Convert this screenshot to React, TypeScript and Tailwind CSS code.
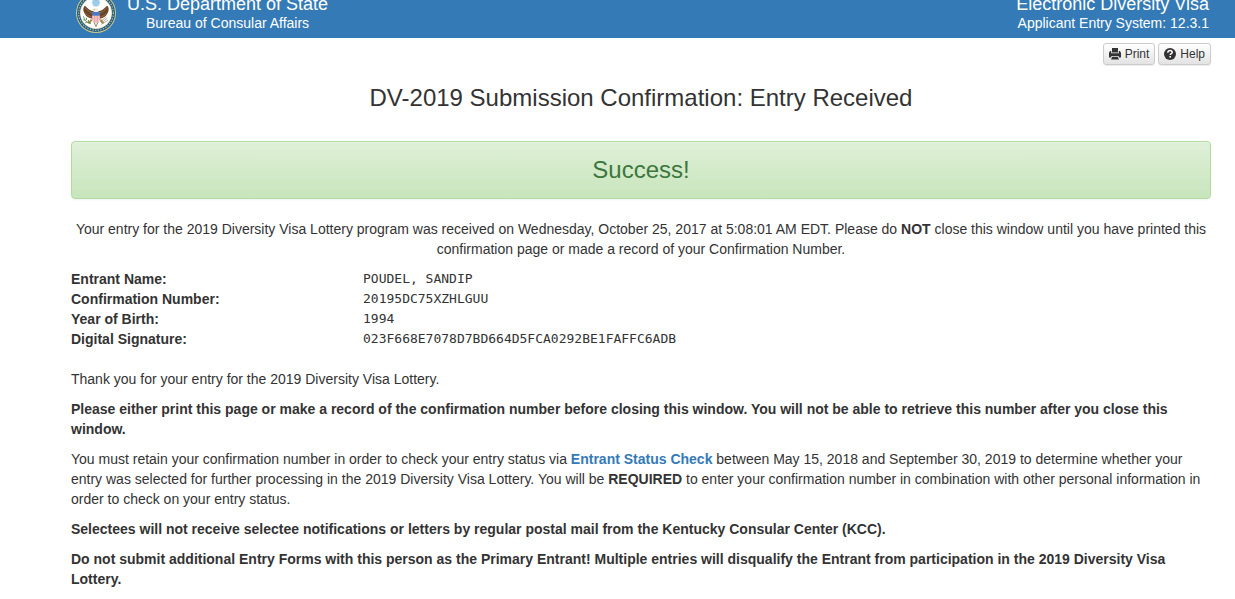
import React from 'react';

const star = 'M0 -1 L0.3 -0.3 L1 -0.3 L0.4 0.2 L0.6 1 L0 0.5 L-0.6 1 L-0.4 0.2 L-1 -0.3 L-0.3 -0.3 Z';

function Seal() {
  return (
    <svg viewBox="0 0 120 120" className="size-10 shrink-0" role="img" aria-label="Department of State seal">
      <circle cx="60" cy="60" r="60" fill="#d3c684" />
      <circle cx="60" cy="60" r="57" fill="#1f5c8a" />
      <circle cx="60" cy="60" r="52" fill="none" stroke="#b0b98f" strokeWidth="4" strokeDasharray="4 4" />
      <circle cx="60" cy="60" r="48" fill="#e3dcae" />
      <circle cx="60" cy="60" r="46" fill="#ffffff" />
      <circle cx="60" cy="29" r="11" fill="#8fc5e8" stroke="#b9dcf2" strokeWidth="2" />
      {[[56, 25], [64, 25], [60, 30], [55, 33], [65, 33]].map(([x, y]) => (
        <path key={`${x}-${y}`} d={star} transform={`translate(${x} ${y}) scale(2)`} fill="#e8f4fb" />
      ))}
      <g transform="translate(0 4)">
        <path
          d="M52 50 C44 50 37 44 27 34 C21 37 21 47 24 54 C27 62 32 68 41 71 L49 73 L55 84 L65 84 L71 73 L79 71 C88 68 93 62 96 54 C99 47 99 37 93 34 C83 44 76 50 68 50 L65 55 L55 55 Z"
          fill="#6b4528"
        />
        <path
          d="M27 39 C34 49 42 55 52 57 M28 57 C36 65 43 67 49 69 M93 39 C86 49 78 55 68 57 M92 57 C84 65 77 67 71 69"
          fill="none"
          stroke="#a17b50"
          strokeWidth="2"
        />
        <path d="M54 53 C53 45 56 41 61 41 C65 41 66 44 66 53 Z" fill="#f3eee0" />
        <path d="M56 43 L50 46 L56 48 Z" fill="#d3a23c" />
        <path d="M47 76 L38 87 M73 76 L82 87" stroke="#b5853a" strokeWidth="6" />
        <path d="M53 82 L60 97 L67 82 Z" fill="#eee7d3" stroke="#79583a" strokeWidth="2" />
        <path d="M48 54 H72 V72 C72 80 67 84 60 87 C53 84 48 80 48 72 Z" fill="#f7dcdc" />
        <path d="M50 61 V78 M55 61 V83 M60 61 V85 M65 61 V83 M70 61 V78" stroke="#e07c84" strokeWidth="2" />
        <path d="M48 53 H72 V64 H48 Z" fill="#4c78c4" />
        <path d="M45 86 C36 88 29 81 24 72" fill="none" stroke="#4f7b45" strokeWidth="3" />
        <path d="M25 72 l-3 -6 M29 78 l-7 -2 M34 82 l-6 3 M31 77 l1 -7 M38 83 l-1 -6" stroke="#68945b" strokeWidth="3" />
        <path d="M75 86 L94 72 M76 90 L96 78 M73 82 L91 68" stroke="#8e8b73" strokeWidth="2" />
      </g>
    </svg>
  );
}

function PrintIcon() {
  return (
    <svg viewBox="0 0 12 12" className="size-3" fill="#333333" aria-hidden="true">
      <path d="M3 0h6v4.5H3z" />
      <path d="M0 5l1-2h1.2v2.3h7.6V3H11l1 2v4.5h-1.8L9.4 8H2.6l-.8 1.5H0z" />
      <path d="M3.2 8.7h5.6L10 11.6H2z" />
    </svg>
  );
}

function HelpIcon() {
  return (
    <svg viewBox="0 0 12 12" className="size-3" aria-hidden="true">
      <circle cx="6" cy="6" r="6" fill="#333333" />
      <path d="M3.8 4.7C3.8 3.2 4.7 2.6 6 2.6c1.4 0 2.2.7 2.2 1.8C8.2 5.7 6.2 5.7 6.2 7.1" fill="none" stroke="#fff" strokeWidth="1.5" />
      <path d="M5.4 8h1.6v1.5H5.4z" fill="#fff" />
    </svg>
  );
}

function ToolButton({ icon, children }: { icon: React.ReactNode; children: React.ReactNode }) {
  return (
    <button
      type="button"
      className="flex items-center gap-1 rounded-[3px] border border-[#cccccc] bg-linear-to-b from-white to-[#e3e3e3] px-[5px] py-px text-xs leading-[18px] shadow-[0_1px_1px_rgba(0,0,0,0.08)]"
    >
      {icon}
      {children}
    </button>
  );
}

const details = [
  ['Entrant Name:', 'POUDEL, SANDIP'],
  ['Confirmation Number:', '20195DC75XZHLGUU'],
  ['Year of Birth:', '1994'],
  ['Digital Signature:', '023F668E7078D7BD664D5FCA0292BE1FAFFC6ADB'],
];

export default function App() {
  return (
    <div className="font-['Liberation_Sans',Arial,sans-serif] text-sm leading-5 text-[#333333]">
      <header className="overflow-hidden bg-[#337ab7] text-white">
        <div className="-mt-[7px] flex items-start justify-between pr-[26px] pb-[5px] pl-[76px]">
          <div className="flex gap-[11px]">
            <Seal />
            <div className="pt-px text-center">
              <div className="text-lg leading-5">U.S. Department of State</div>
              <div className="leading-[18px]">Bureau of Consular Affairs</div>
            </div>
          </div>
          <div className="pt-px text-right">
            <div className="text-lg leading-5">Electronic Diversity Visa</div>
            <div className="leading-[18px]">Applicant Entry System: 12.3.1</div>
          </div>
        </div>
      </header>

      <main className="pr-6 pl-[71px]">
        <div className="flex justify-end gap-[3px] pt-[5px]">
          <ToolButton icon={<PrintIcon />}>Print</ToolButton>
          <ToolButton icon={<HelpIcon />}>Help</ToolButton>
        </div>

        <h1 className="mt-5 text-center text-2xl leading-[26px]">DV-2019 Submission Confirmation: Entry Received</h1>

        <div
          role="status"
          className="mt-[30px] rounded border border-[#b2dba1] bg-linear-to-b from-[#dff0d8] to-[#c8e5bc] p-[15px] text-center text-2xl leading-[26px] text-[#3c763d] shadow-[inset_0_1px_0_rgba(255,255,255,0.25),0_1px_2px_rgba(0,0,0,0.05)]"
        >
          Success!
        </div>

        <p className="mt-5 text-center">
          Your entry for the 2019 Diversity Visa Lottery program was received on Wednesday, October 25, 2017 at 5:08:01
          AM EDT. Please do <strong>NOT</strong> close this window until you have printed this confirmation page or made
          a record of your Confirmation Number.
        </p>

        <dl className="mt-[10px]">
          {details.map(([label, value]) => (
            <div key={label} className="grid grid-cols-[292px_1fr]">
              <dt className="font-bold">{label}</dt>
              <dd className="font-['DejaVu_Sans_Mono',monospace] text-[13px] leading-5">{value}</dd>
            </div>
          ))}
        </dl>

        <div className="mt-5 flex flex-col gap-[10px] pb-[10px]">
          <p>Thank you for your entry for the 2019 Diversity Visa Lottery.</p>
          <p className="font-bold">
            Please either print this page or make a record of the confirmation number before closing this window. You
            will not be able to retrieve this number after you close this window.
          </p>
          <p>
            You must retain your confirmation number in order to check your entry status via{' '}
            <a href="#status" className="font-bold text-[#337ab7]">
              Entrant Status Check
            </a>{' '}
            between May 15, 2018 and September 30, 2019 to determine whether your entry was selected for further
            processing in the 2019 Diversity Visa Lottery. You will be <strong>REQUIRED</strong> to enter your
            confirmation number in combination with other personal information in order to check on your entry status.
          </p>
          <p className="font-bold">
            Selectees will not receive selectee notifications or letters by regular postal mail from the Kentucky
            Consular Center (KCC).
          </p>
          <p className="font-bold">
            Do not submit additional Entry Forms with this person as the Primary Entrant! Multiple entries will
            disqualify the Entrant from participation in the 2019 Diversity Visa Lottery.
          </p>
        </div>
      </main>
    </div>
  );
}
